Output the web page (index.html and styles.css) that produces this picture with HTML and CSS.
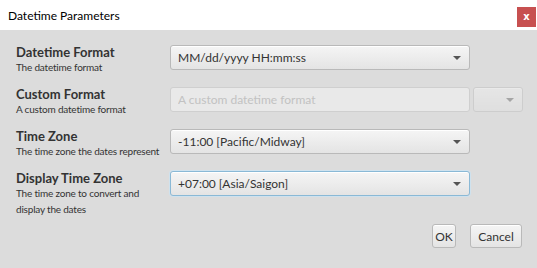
FILE: index.html
```html
<!DOCTYPE html>
<html>
    <head>
        <title>Datetime Parameters</title>
        <link rel="stylesheet" href="styles.css">
    </head>
    <body>
        <div class="titlebar">
            <span class="title">Datetime Parameters</span>
            <button class="close" type="button">x</button>
        </div>

        <div class="content">
            <div class="form">
                <div class="label">
                    <div class="name">Datetime Format</div>
                    <div class="hint">The datetime format</div>
                </div>
                <div class="field">
                    <div class="combo wide">
                        <span>MM/dd/yyyy HH:mm:ss</span>
                        <i class="arrow"></i>
                    </div>
                </div>

                <div class="label">
                    <div class="name">Custom Format</div>
                    <div class="hint">A custom datetime format</div>
                </div>
                <div class="field">
                    <input class="text wide" type="text" placeholder="A custom datetime format" disabled>
                    <div class="combo small disabled"><i class="arrow"></i></div>
                </div>

                <div class="label">
                    <div class="name">Time Zone</div>
                    <div class="hint">The time zone the dates represent</div>
                </div>
                <div class="field">
                    <div class="combo wide">
                        <span>-11:00 [Pacific/Midway]</span>
                        <i class="arrow"></i>
                    </div>
                </div>

                <div class="label">
                    <div class="name">Display Time Zone</div>
                    <div class="hint">The time zone to convert and<br>display the dates</div>
                </div>
                <div class="field">
                    <div class="combo wide focused">
                        <span>+07:00 [Asia/Saigon]</span>
                        <i class="arrow"></i>
                    </div>
                </div>
            </div>

            <div class="actions">
                <button type="button" class="btn btn-ok">OK</button>
                <button type="button" class="btn btn-cancel">Cancel</button>
            </div>
        </div>
    </body>
</html>
```

FILE: styles.css
```css
* {box-sizing: border-box}

body {
  margin: 0;
  height: 268px;
  background: #dcdcdc;
  font-family: Lato, "Open Sans", sans-serif;
  color: #333;
  overflow: hidden;
}

/* window title */
.titlebar {
  height: 30px;
  background: #fff;
  display: flex;
  align-items: center;
  justify-content: space-between;
  padding: 0 1px 0 8px;
}

.title {
  font-size: 12px;
  color: #000;
}

.close {
  width: 19px;
  height: 20px;
  margin-top: 3px;
  border: none;
  padding: 0;
  background: #c75050;
  color: #fff;
  font-family: "DejaVu Sans", sans-serif;
  font-weight: bold;
  font-size: 10px;
  line-height: 18px;
}

.content {
  padding: 15px 15px 0 16px;
}

/* label / control grid */
.form {
  display: grid;
  grid-template-columns: 154px 1fr;
  row-gap: 11.5px;
}

.name {
  font-size: 13px;
  font-weight: bold;
  line-height: 15px;
  color: #333;
  white-space: nowrap;
}

.hint {
  font-size: 10px;
  letter-spacing: -0.2px;
  line-height: 15.5px;
  color: #333;
  white-space: nowrap;
}

.field {
  display: flex;
  gap: 3px;
}

.combo {
  height: 25px;
  border: 1px solid #b9b9b9;
  border-radius: 3px;
  background: linear-gradient(#f5f5f5, #e4e4e4);
  box-shadow: inset 0 1px 0 #fff;
  display: flex;
  align-items: center;
  justify-content: space-between;
  padding: 0 8px 0 7px;
  font-size: 12px;
}

.wide {
  width: 300px;
}

.small {
  width: 50px;
  justify-content: flex-end;
}

.arrow {
  width: 0;
  height: 0;
  border-left: 4px solid transparent;
  border-right: 4px solid transparent;
  border-top: 4px solid #555;
}

.disabled {
  opacity: 0.4;
}

.focused {
  border-color: #8ab9d6;
  box-shadow: 0 0 0 1px #cfe2ee, inset 0 1px 0 #fff;
}

.text {
  height: 25px;
  border: 1px solid #cfcfcf;
  border-radius: 3px;
  background: #e9e9e9;
  padding: 0 7px;
  font-family: inherit;
  font-size: 12px;
}

.text::placeholder {
  color: #c2c2c2;
}

.actions {
  display: flex;
  justify-content: flex-end;
  gap: 14px;
  margin-top: 7px;
}

.btn {
  height: 24px;
  padding: 0;
  border: 1px solid #b9b9b9;
  border-radius: 3px;
  background: linear-gradient(#f5f5f5, #e4e4e4);
  box-shadow: inset 0 1px 0 #fff;
  font-family: inherit;
  font-size: 12px;
  color: #333;
}

.btn-ok {
  width: 24px;
}

.btn-cancel {
  width: 52px;
}
```
